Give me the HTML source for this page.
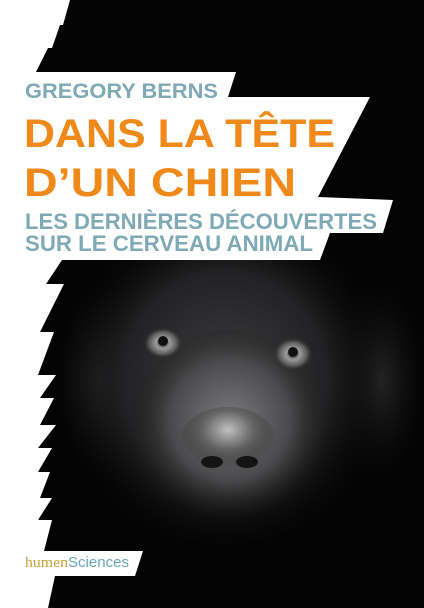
<!DOCTYPE html>
<html><head><meta charset="utf-8"><style>
html,body{margin:0;padding:0;background:#000;}
svg{display:block}
</style></head><body>
<svg width="424" height="608" viewBox="0 0 424 608" xmlns="http://www.w3.org/2000/svg">
<defs>
<radialGradient id="face" cx="0.5" cy="0.5" r="0.5">
<stop offset="0" stop-color="#3e3e40"/>
<stop offset="0.6" stop-color="#222224"/>
<stop offset="1" stop-color="#050505" stop-opacity="0"/>
</radialGradient>
<radialGradient id="muz" cx="0.5" cy="0.45" r="0.5">
<stop offset="0" stop-color="#7a7a7c"/>
<stop offset="0.6" stop-color="#4a4a4c"/>
<stop offset="1" stop-color="#1a1a1a" stop-opacity="0"/>
</radialGradient>
<radialGradient id="nose" cx="0.5" cy="0.3" r="0.5">
<stop offset="0" stop-color="#c0c0c0"/>
<stop offset="0.5" stop-color="#666"/>
<stop offset="1" stop-color="#2a2a2a" stop-opacity="0"/>
</radialGradient>
<radialGradient id="eye" cx="0.5" cy="0.5" r="0.5">
<stop offset="0" stop-color="#222"/>
<stop offset="0.35" stop-color="#9a9a9a"/>
<stop offset="0.7" stop-color="#5a5a5a"/>
<stop offset="1" stop-color="#222" stop-opacity="0"/>
</radialGradient>
<radialGradient id="ear" cx="0.5" cy="0.5" r="0.5">
<stop offset="0" stop-color="#2a2a2c"/>
<stop offset="1" stop-color="#000" stop-opacity="0"/>
</radialGradient>
</defs>
<rect width="424" height="608" fill="#030303"/>
<ellipse cx="100" cy="380" rx="55" ry="110" fill="url(#ear)"/>
<ellipse cx="380" cy="380" rx="55" ry="120" fill="url(#ear)"/>
<ellipse cx="225" cy="380" rx="170" ry="180" fill="url(#face)"/>
<ellipse cx="230" cy="430" rx="100" ry="100" fill="url(#muz)"/>
<ellipse cx="228" cy="445" rx="50" ry="38" fill="url(#nose)"/>
<ellipse cx="212" cy="462" rx="11" ry="6" fill="#141414"/>
<ellipse cx="247" cy="462" rx="11" ry="6" fill="#141414"/>
<ellipse cx="163" cy="343" rx="20" ry="16" fill="url(#eye)"/>
<ellipse cx="293" cy="354" rx="20" ry="17" fill="url(#eye)"/>
<circle cx="163" cy="341" r="5" fill="#111"/>
<circle cx="293" cy="352" r="5" fill="#111"/>
<polygon fill="#fff" points="0,0 70,0 63,25 60,25 52,48 48,48 36,72 236,72 228,97 370,97 318,197 393,200 383,233 330,233 320,260 62,260 46,284 64,284 40,332 54,332 38,375 56,375 40,398 54,398 40,425 56,425 38,448 52,448 38,472 50,472 40,498 52,498 38,520 52,520 44,551 143,551 135,576 55,576 48,608 0,608"/>
<g font-family="Liberation Sans, sans-serif" font-weight="bold">
<text x="25" y="98" font-size="21" fill="#7fa9b5" textLength="193" lengthAdjust="spacingAndGlyphs">GREGORY BERNS</text>
<text x="24" y="147" font-size="40" fill="#ef8a1a" textLength="311" lengthAdjust="spacingAndGlyphs">DANS LA TÊTE</text>
<text x="24" y="196" font-size="40" fill="#ef8a1a" textLength="272" lengthAdjust="spacingAndGlyphs">D’UN CHIEN</text>
<text x="25" y="229" font-size="22" fill="#7fa9b5" textLength="352" lengthAdjust="spacingAndGlyphs">LES DERNIÈRES DÉCOUVERTES</text>
<text x="25" y="251" font-size="22" fill="#7fa9b5" textLength="288" lengthAdjust="spacingAndGlyphs">SUR LE CERVEAU ANIMAL</text>
</g>
<text x="25" y="567" font-size="15" font-family="Liberation Serif, serif" fill="#c9a23a" textLength="43" lengthAdjust="spacingAndGlyphs">humen</text>
<text x="68" y="567" font-size="15" font-family="Liberation Sans, sans-serif" fill="#6aa7b8" textLength="61" lengthAdjust="spacingAndGlyphs">Sciences</text>
</svg>
</body></html>
